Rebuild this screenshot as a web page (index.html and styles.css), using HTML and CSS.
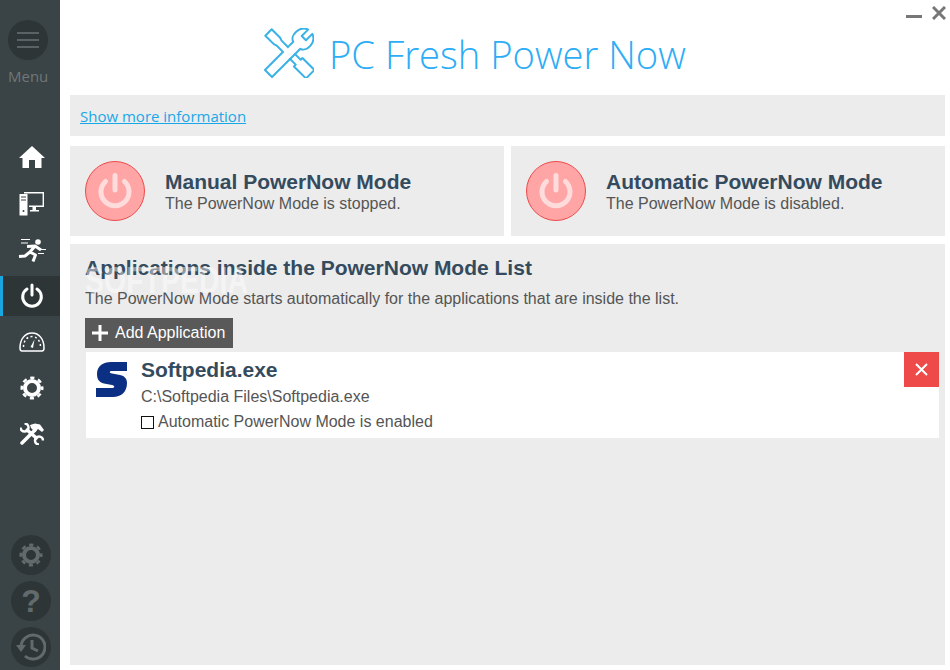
FILE: index.html
```html
<!DOCTYPE html>
<html lang="en">
  <head>
    <meta charset="UTF-8" />
    <title>PC Fresh Power Now</title>
    <link rel="stylesheet" href="styles.css">
  </head>
  <body>
    <aside class="sidebar">
      <div class="menu">
        <button class="round-btn menu-btn" aria-label="Menu">
          <svg width="22" height="18" viewBox="0 0 22 18"><path d="M0 2H22M0 9H22M0 16H22" stroke="#596264" stroke-width="2" /></svg>
        </button>
        <div class="menu-label">Menu</div>
      </div>

      <nav class="nav">
        <a class="nav-item">
          <svg width="26" height="24" viewBox="0 0 26 24"><path d="M13 0 L26 12 H22.500 V22 H16 V14 H10 V22 H3.500 V12 H0Z" fill="#fff" /></svg>
        </a>
        <a class="nav-item">
          <svg width="26" height="24" viewBox="0 0 26 24">
            <path d="M5 .700 H24.300 V14" fill="none" stroke="#fff" stroke-width="1.400" />
            <path d="M9 13.500 H25 V15 H9Z M13.500 15 H17 V18 H20 V19.500 H11 V18 H13.500Z" fill="#fff" />
            <path d="M9.500 2 V15" stroke="#3a4345" stroke-width="1" />
            <path d="M.500 2.500 Q.500 2 1 2 H8.500 V23.500 H1 Q.500 23.500 .500 23Z" fill="#fff" />
            <path d="M2 5H7M2 8H7" stroke="#3a4345" stroke-width="1" />
            <circle cx="4.500" cy="19" r="1" fill="#3a4345" />
          </svg>
        </a>
        <a class="nav-item">
          <svg width="28" height="24" viewBox="0 0 28 24">
            <circle cx="20" cy="4" r="2.800" fill="#fff" />
            <path d="M9 8.500 L17 8 L23 12 M17 8 L12 14 L7 18 L1 18.500 M12 14 L17.500 17 L15 23.500" fill="none" stroke="#fff" stroke-width="3" stroke-linejoin="round" />
            <path d="M3 1.500H12M3 5H10M20 15.500H26M23 11.500H28" stroke="#fff" stroke-width="1.200" />
          </svg>
        </a>
        <a class="nav-item active">
          <svg width="24" height="26" viewBox="0 0 24 26"><path d="M7 6 A9.300 9.300 0 1 0 17 6 M12 2 V12" fill="none" stroke="#fff" stroke-width="3" stroke-linecap="round" /></svg>
        </a>
        <a class="nav-item">
          <svg width="26" height="20" viewBox="0 0 26 20">
            <path d="M3 19 H23 Q25 19 25 16 C25 7 20 1 13 1 C6 1 1 7 1 16 Q1 19 3 19Z" fill="none" stroke="#fff" stroke-width="1.500" />
            <path d="M4.500 15 C4.500 9 8 4.500 13 4.500 C18 4.500 21.500 9 21.500 15" fill="none" stroke="#fff" stroke-width="1.500" stroke-dasharray="2 2.500" />
            <path d="M11.500 15 L15.500 7.500 L14 16Z" fill="#fff" />
          </svg>
        </a>
        <a class="nav-item">
          <svg width="24" height="24" viewBox="0 0 24 24">
            <circle cx="12" cy="12" r="7" fill="none" stroke="#fff" stroke-width="4" />
            <circle cx="12" cy="12" r="10.250" fill="none" stroke="#fff" stroke-width="2.500" stroke-dasharray="4.200 3.850" stroke-dashoffset="2.100" />
          </svg>
        </a>
        <a class="nav-item">
          <svg width="24" height="22" viewBox="0 0 24 22">
            <path d="M6 6 L17.500 16" stroke="#fff" stroke-width="3.500" />
            <path d="M4.500 .500 A4 4 0 1 1 .500 4.500 M23 17.500 A4 4 0 1 0 19 21.500" fill="none" stroke="#fff" stroke-width="2.500" />
            <path d="M2 20 L15 7" stroke="#fff" stroke-width="3.500" stroke-linecap="round" />
            <path d="M10 2 L15 .500 L20 1.500 L24 7 L22 9 L18 6 L15 9 L11 5Z" fill="#fff" />
          </svg>
        </a>
      </nav>

      <div class="sidebar-bottom">
        <button class="round-btn" aria-label="Options">
          <svg width="24" height="24" viewBox="0 0 24 24">
            <circle cx="12" cy="12" r="7" fill="none" stroke="#626a6c" stroke-width="4" />
            <circle cx="12" cy="12" r="10.250" fill="none" stroke="#626a6c" stroke-width="2.500" stroke-dasharray="4.200 3.850" stroke-dashoffset="2.100" />
          </svg>
        </button>
        <button class="round-btn help-btn" aria-label="Help">?</button>
        <button class="round-btn" aria-label="History">
          <svg width="30" height="28" viewBox="0 0 30 28">
            <path d="M5 14 A12 12 0 1 1 9 23" fill="none" stroke="#626a6c" stroke-width="3" />
            <path d="M0 12 H10 L5 19Z" fill="#626a6c" />
            <path d="M16 7 V15 L22 18" fill="none" stroke="#626a6c" stroke-width="3" />
          </svg>
        </button>
      </div>
    </aside>

    <div class="window-controls">
      <span class="minimize"></span>
      <svg width="14" height="14" viewBox="0 0 14 14"><path d="M1 1L13 13M13 1L1 13" stroke="#777" stroke-width="3" /></svg>
    </div>

    <main class="content">
      <header class="app-header">
        <svg class="app-logo" width="50" height="50" viewBox="0 0 50 50">
          <g fill="none" stroke="#3bb2e6" stroke-width="2" stroke-linejoin="round">
            <g transform="translate(25 25) rotate(45)">
              <path d="M-4 -3.500 H-14 L-17 -4.500 H-29 V4.500 H-17 L-14 3.500 H-4" />
              <path d="M4 -3.500 H13 V-6 H30 V6 H13 V3.500 H4" />
            </g>
            <g transform="translate(25 25) rotate(-45)">
              <path d="M-4 -5 H-29 V5 H4" />
              <path d="M4 5 H11 C13 12 27 12 30 3 H21 V-3 H30 C27 -12 13 -12 11 -5 H4" />
            </g>
          </g>
        </svg>
        <h1 class="app-title">PC Fresh Power Now</h1>
      </header>

      <div class="panel info-bar"><a href="#">Show more information</a></div>

      <div class="modes">
        <section class="panel mode-card">
          <div class="power-badge">
            <svg width="34" height="36" viewBox="0 0 34 36"><path d="M7.500 8.500 A14 14 0 1 0 26.500 8.500 M17 2.500 V17" fill="none" stroke="#ffdcdc" stroke-width="5" stroke-linecap="round" /></svg>
          </div>
          <div>
            <h2>Manual PowerNow Mode</h2>
            <p>The PowerNow Mode is stopped.</p>
          </div>
        </section>
        <section class="panel mode-card">
          <div class="power-badge">
            <svg width="34" height="36" viewBox="0 0 34 36"><path d="M7.500 8.500 A14 14 0 1 0 26.500 8.500 M17 2.500 V17" fill="none" stroke="#ffdcdc" stroke-width="5" stroke-linecap="round" /></svg>
          </div>
          <div>
            <h2>Automatic PowerNow Mode</h2>
            <p>The PowerNow Mode is disabled.</p>
          </div>
        </section>
      </div>

      <section class="panel app-list">
        <h2>Applications inside the PowerNow Mode List</h2>
        <p>The PowerNow Mode starts automatically for the applications that are inside the list.</p>
        <button class="add-btn">
          <svg width="16" height="16" viewBox="0 0 16 16"><path d="M8 0V16M0 8H16" stroke="#fff" stroke-width="3" /></svg>
          Add Application
        </button>

        <div class="app-row">
          <svg class="app-icon" width="31" height="35" viewBox="0 0 31 35">
            <path d="M31 0 V9 H16 C13 9 13 11 16 11.500 L24 13 C29 14 31 17 31 21 C31 30 25 35 17 35 H0 V26 H16 C19 26 19 23.500 16 23 L8 21.500 C3 20.500 1 17 1 12 C1 4 7 0 15 0Z" fill="#0b2f82" />
          </svg>
          <div class="app-info">
            <h3>Softpedia.exe</h3>
            <div class="app-path">C:\Softpedia Files\Softpedia.exe</div>
            <label class="app-check"><span class="checkbox"></span>Automatic PowerNow Mode is enabled</label>
          </div>
          <button class="remove-btn" aria-label="Remove">
            <svg width="13" height="13" viewBox="0 0 13 13"><path d="M1 1L12 12M12 1L1 12" stroke="#fff" stroke-width="2" /></svg>
          </button>
        </div>

        <div class="watermark">SOFTPEDIA</div>
      </section>
    </main>
  </body>
</html>
```

FILE: styles.css
```css
* {
  margin: 0;
  padding: 0;
  box-sizing: border-box;
}

body {
  font-family: "Liberation Sans", Arial, sans-serif;
  width: 950px;
  height: 670px;
  display: flex;
  overflow: hidden;
  background: #fff;
  color: #555;
}

button {
  border: none;
  font: inherit;
  cursor: pointer;
}

/* Sidebar */
.sidebar {
  width: 60px;
  flex-shrink: 0;
  background: #3a4345;
  display: flex;
  flex-direction: column;
}

.menu {
  padding: 20px 0 0 8px;
  height: 138px;
}

.round-btn {
  width: 40px;
  height: 40px;
  border-radius: 50%;
  background: #2e3537;
  display: flex;
  justify-content: center;
  align-items: center;
}

.menu-label {
  width: 40px;
  margin-top: 7px;
  text-align: center;
  font-family: "Open Sans", sans-serif;
  font-size: 15px;
  line-height: 18px;
  color: #6f7779;
}

.nav {
  display: flex;
  flex-direction: column;
  gap: 6px;
}

.nav-item {
  height: 40px;
  padding-left: 3px;
  display: flex;
  justify-content: center;
  align-items: center;
}

.nav-item.active {
  background: #2e3537;
  border-left: 3px solid #1aa7e0;
  padding-left: 0;
}

.sidebar-bottom {
  margin-top: auto;
  padding: 0 0 3px 11px;
  display: flex;
  flex-direction: column;
  gap: 6px;
}

.help-btn {
  font-size: 32px;
  font-weight: bold;
  color: #626a6c;
}

/* Window buttons */
.window-controls {
  position: absolute;
  top: 6px;
  right: 4px;
  display: flex;
  align-items: flex-end;
  gap: 10px;
}

.minimize {
  width: 16px;
  height: 3px;
  margin-bottom: 2px;
  background: #777;
}

/* Main area */
.content {
  flex: 1;
  padding: 0 5px 5px 10px;
  display: flex;
  flex-direction: column;
}

.app-header {
  height: 95px;
  padding: 28px 0 0 194px;
  display: flex;
  align-items: flex-start;
  gap: 15px;
}

.app-title {
  margin-top: -1px;
  font-family: "Open Sans", sans-serif;
  font-weight: 300;
  font-size: 38.200px;
  line-height: 54px;
  color: #2cadf6;
}

.panel {
  background: #ececec;
}

.info-bar {
  height: 41px;
  padding: 0 10px;
  display: flex;
  align-items: center;
  font-family: "Open Sans", sans-serif;
  font-size: 15px;
}

.info-bar a {
  color: #1aa7e8;
}

.modes {
  margin-top: 10px;
  display: flex;
  gap: 7px;
}

.mode-card {
  flex: 1;
  height: 90px;
  padding-left: 15px;
  display: flex;
  align-items: center;
  gap: 20px;
}

.mode-card p {
  margin-top: 1px;
}

.power-badge {
  width: 60px;
  height: 60px;
  border-radius: 50%;
  background: #ffa5a5;
  border: 1px solid #ee4a4a;
  display: flex;
  justify-content: center;
  align-items: center;
}

h2 {
  font-size: 21px;
  line-height: 24px;
  color: #344b5e;
}

p {
  font-size: 16px;
  line-height: 18px;
}

.app-list {
  position: relative;
  margin-top: 8px;
  flex: 1;
  padding: 12px 6px 0 15px;
}

.app-list p {
  margin-top: 10px;
}

.add-btn {
  margin-top: 10px;
  height: 30px;
  width: 148px;
  padding-left: 7px;
  background: #595959;
  color: #fff;
  font-size: 16px;
  display: flex;
  align-items: center;
  gap: 7px;
}

.app-row {
  margin-top: 4px;
  margin-left: 1px;
  height: 86px;
  padding: 9px 0 0 10px;
  background: #fff;
  display: flex;
  align-items: flex-start;
}

.app-icon {
  margin-top: 1px;
}

.app-info {
  margin-left: 14px;
  flex: 1;
}

.app-info h3 {
  font-size: 21px;
  line-height: 18px;
  color: #344b5e;
}

.app-path {
  margin-top: 9px;
  font-size: 16px;
  line-height: 18px;
}

.app-check {
  margin-top: 7px;
  font-size: 16px;
  line-height: 18px;
  display: flex;
  align-items: center;
  gap: 4px;
}

.checkbox {
  width: 13px;
  height: 13px;
  border: 1px solid #111;
  background: #fff;
}

.remove-btn {
  width: 35px;
  height: 35px;
  margin-top: -9px;
  background: #ee4a4a;
  display: flex;
  justify-content: center;
  align-items: center;
}

.watermark {
  position: absolute;
  left: 15px;
  top: 17px;
  font-size: 37px;
  line-height: 40px;
  font-weight: bold;
  color: rgba(255, 255, 255, 0.45);
  transform: scaleX(0.77);
  transform-origin: left;
  pointer-events: none;
}
```
